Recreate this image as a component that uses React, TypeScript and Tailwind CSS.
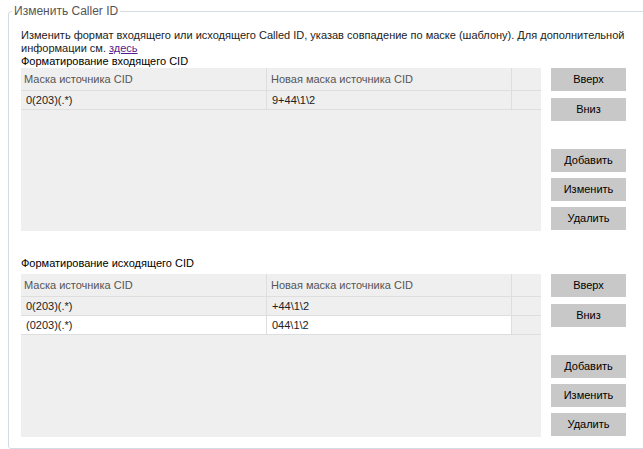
const incoming = [{ src: "0(203)(.*)", dst: "9+44\\1\\2", selected: false }]

const outgoing = [
  { src: "0(203)(.*)", dst: "+44\\1\\2", selected: false },
  { src: "(0203)(.*)", dst: "044\\1\\2", selected: true },
]

type Row = { src: string; dst: string; selected: boolean }

function Btn({ label, className = "" }: { label: string; className?: string }) {
  return (
    <button className={`h-[23px] w-[75px] bg-[#c8c8c8] text-[11px] text-black ${className}`}>{label}</button>
  )
}

function MaskTable({ rows }: { rows: Row[] }) {
  return (
    <div className="flex items-start">
      <div className="h-[163px] w-[520px] bg-[#efefef]">
        <div className="grid grid-cols-[246px_245px_1fr] text-[11px]">
          <div className="h-[23px] border-r border-b border-[#dedede] pl-[3px] leading-[22px] text-[#555]">
            Маска источника CID
          </div>
          <div className="h-[23px] border-r border-b border-[#dedede] pl-[4px] leading-[22px] text-[#555]">
            Новая маска источника CID
          </div>
          <div className="h-[23px] border-b border-[#dedede]" />
          {rows.map((r, i) => (
            <div key={i} className="contents">
              <div
                className={`h-[19px] border-r border-b border-[#dedede] pl-[5px] leading-[18px] text-[#222] ${r.selected ? "bg-white" : ""}`}
              >
                {r.src}
              </div>
              <div
                className={`h-[19px] border-r border-b border-[#dedede] pl-[5px] leading-[18px] text-[#222] ${r.selected ? "bg-white" : ""}`}
              >
                {r.dst}
              </div>
              <div className="h-[19px] border-b border-[#dedede]" />
            </div>
          ))}
        </div>
      </div>
      <div className="ml-[10px] flex flex-col">
        <Btn label="Вверх" />
        <Btn label="Вниз" className="mt-[7px]" />
        <Btn label="Добавить" className="mt-[28px]" />
        <Btn label="Изменить" className="mt-[6px]" />
        <Btn label="Удалить" className="mt-[6px]" />
      </div>
    </div>
  )
}

export default function App() {
  return (
    <div className="h-[449px] w-[643px] overflow-hidden bg-white font-['Liberation_Sans',Arial,sans-serif] text-[11px]">
      <fieldset className="ml-[8px] mt-[4px] h-[445px] w-[660px] rounded-[3px] border border-[#d3dce6]">
        <legend className="ml-[3px] px-[2px] text-[12px] leading-[14px] text-[#555]">Изменить Caller ID</legend>
        <div className="pl-[12px] pt-[11px]">
          <p className="w-[610px] leading-[13px] text-[#222]">
            Изменить формат входящего или исходящего Called ID, указав совпадение по маске (шаблону). Для дополнительной
            информации см.{" "}
            <a className="text-[#551a8b] underline" href="#">
              здесь
            </a>
          </p>
          <div className="mt-[1px] leading-[10px] text-black">Форматирование входящего CID</div>
          <div className="mt-[2px]">
            <MaskTable rows={incoming} />
          </div>
          <div className="mt-[25px] leading-[14px] text-black">Форматирование исходящего CID</div>
          <div className="mt-[4px]">
            <MaskTable rows={outgoing} />
          </div>
        </div>
      </fieldset>
    </div>
  )
}
